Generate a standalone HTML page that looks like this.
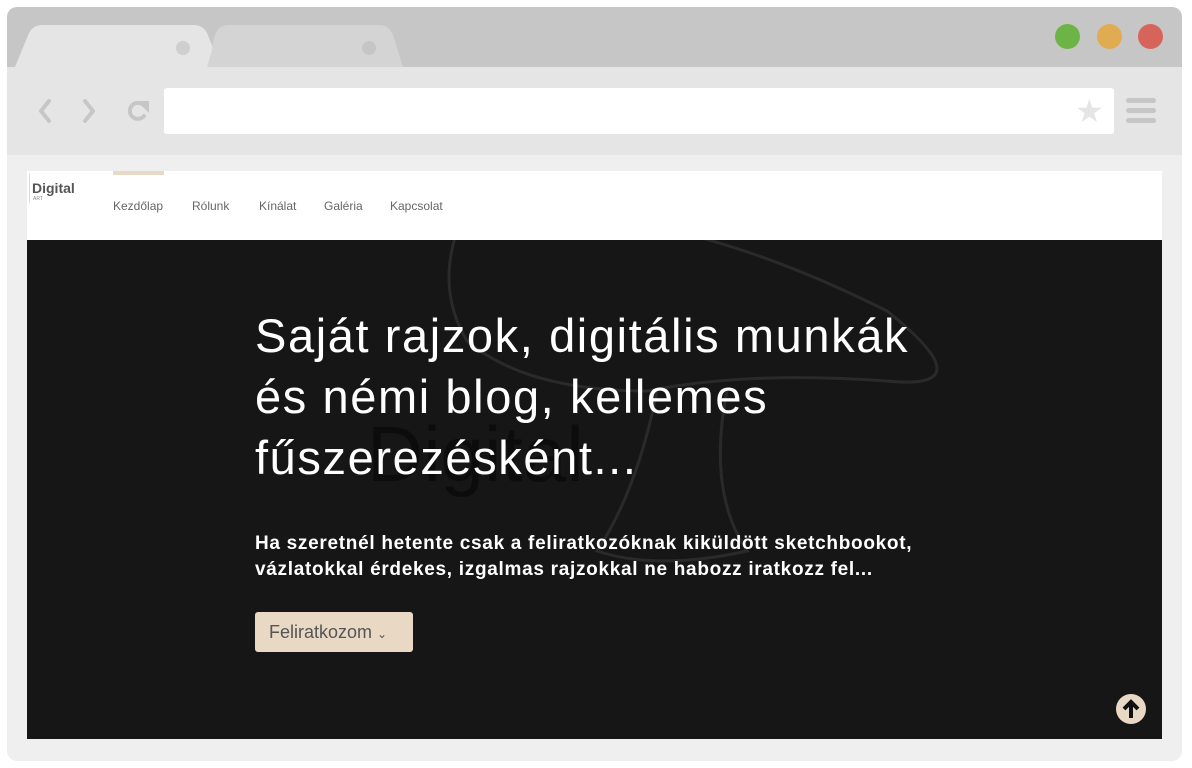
<!DOCTYPE html>
<html><head><meta charset="utf-8"><style>
*{margin:0;padding:0;box-sizing:border-box}
body{width:1192px;height:768px;background:#fff;font-family:"Liberation Sans",sans-serif;position:relative;overflow:hidden}
.frame{position:absolute;left:7px;top:7px;width:1175px;height:754px;background:#efefef;border-radius:10px;overflow:hidden}
.top{position:absolute;left:0;top:0;width:100%;height:60px;background:#c6c6c6}
.tool{position:absolute;left:0;top:60px;width:100%;height:88px;background:#e5e5e5}
.dot{position:absolute;width:25px;height:25px;border-radius:50%;top:17px}
.url{position:absolute;left:164px;top:88px;width:950px;height:46px;background:#fff;border-radius:3px}
.page{position:absolute;left:27px;top:171px;width:1135px;height:568px;background:#161616;overflow:hidden}
.nav{position:absolute;left:0;top:0;width:100%;height:69px;background:#fff}
.nav a{position:absolute;top:28px;font-size:12px;color:#666}
h1{position:absolute;left:228px;top:134px;width:690px;font-weight:300;font-size:47px;line-height:61px;color:#fff;letter-spacing:1.6px}
p.s{position:absolute;left:228px;top:360px;width:720px;font-weight:bold;font-size:19px;line-height:26px;color:#fff;letter-spacing:0.7px}
.btn{position:absolute;left:228px;top:441px;width:158px;height:40px;background:#e8d8c4;border-radius:3px;color:#555;font-size:18px;line-height:40px;padding-left:14px}
</style></head><body>
<div class="frame">
<div class="top"></div>
<svg style="position:absolute;left:0;top:0" width="420" height="60"><path d="M8 60 L22 26 Q26 18 36 18 L186 18 Q196 18 200 26 L214 60 Z" fill="#e5e5e5"/><path d="M200 60 L208 28 Q211 18 222 18 L372 18 Q382 18 386 28 L396 60 Z" fill="#d4d4d4"/><path d="M196 60 L200 60 L206 40 Z" fill="#e5e5e5"/><circle cx="176" cy="41" r="7" fill="#cfcfcf"/><circle cx="362" cy="41" r="7" fill="#c6c6c6"/></svg>
<div class="dot" style="left:1048px;background:#6db446"></div>
<div class="dot" style="left:1090px;background:#e1ab52"></div>
<div class="dot" style="left:1131px;background:#d7645a"></div>
<div class="tool"></div>
<svg style="position:absolute;left:25px;top:88px" width="130" height="32" viewBox="0 0 130 32"><g fill="none" stroke="#c6c6c6" stroke-width="4" stroke-linecap="round" stroke-linejoin="round"><path d="M17 6 L9 16 L17 26"/><path d="M53 6 L61 16 L53 26"/><path d="M110 9 A8 8 0 1 0 112 21"/></g><path d="M105 6 L117 6 L117 18 Z" fill="#c6c6c6"/></svg>
</div>
<div class="url"></div>
<div style="position:absolute;left:1075px;top:92px;font-size:32px;color:#e5e5e5">★</div>
<div style="position:absolute;left:1126px;top:98px;width:30px;height:5px;background:#c6c6c6;border-radius:3px"></div>
<div style="position:absolute;left:1126px;top:108px;width:30px;height:5px;background:#c6c6c6;border-radius:3px"></div>
<div style="position:absolute;left:1126px;top:118px;width:30px;height:5px;background:#c6c6c6;border-radius:3px"></div>
<div class="page">
<svg style="position:absolute;left:300px;top:20px" width="660" height="420" viewBox="0 0 660 420"><g fill="none" stroke="#2a2a2a" stroke-width="3"><path d="M130 40 Q300 -10 560 120 Q660 200 560 190 Q420 180 320 200 Q200 200 140 150 Q110 100 130 40Z"/><path d="M330 200 Q310 300 270 360 Q330 380 420 360 Q380 300 400 200"/></g><text x="40" y="290" font-family="Liberation Sans" font-size="78" fill="#0c0c0c">Digital</text></svg>
<div class="nav">
<div style="position:absolute;left:2px;top:2px;width:1px;height:30px;background:#e8d8c4"></div>
<div style="position:absolute;left:5px;top:9px;font-size:14px;font-weight:bold;color:#555">Digital</div>
<div style="position:absolute;left:6px;top:25px;font-size:5px;color:#888">ART</div>
<div style="position:absolute;left:86px;top:0;width:51px;height:4px;background:#e8d8c4"></div>
<a style="left:86px">Kezdőlap</a><a style="left:165px">Rólunk</a><a style="left:232px">Kínálat</a><a style="left:297px">Galéria</a><a style="left:363px">Kapcsolat</a>
</div>
<h1>Saját rajzok, digitális munkák és némi blog, kellemes fűszerezésként...</h1>
<p class="s">Ha szeretnél hetente csak a feliratkozóknak kiküldött sketchbookot, vázlatokkal érdekes, izgalmas rajzokkal ne habozz iratkozz fel...</p>
<div class="btn">Feliratkozom <span style="font-size:12px">⌄</span></div>
<div style="position:absolute;left:1089px;top:523px;width:30px;height:30px;border-radius:50%;background:#e8d8c4"></div>
<svg style="position:absolute;left:1089px;top:523px" width="30" height="30"><path d="M15 24 V9 M8 15 L15 8 L22 15" stroke="#111" stroke-width="4" fill="none"/></svg>
</div>
</body></html>
